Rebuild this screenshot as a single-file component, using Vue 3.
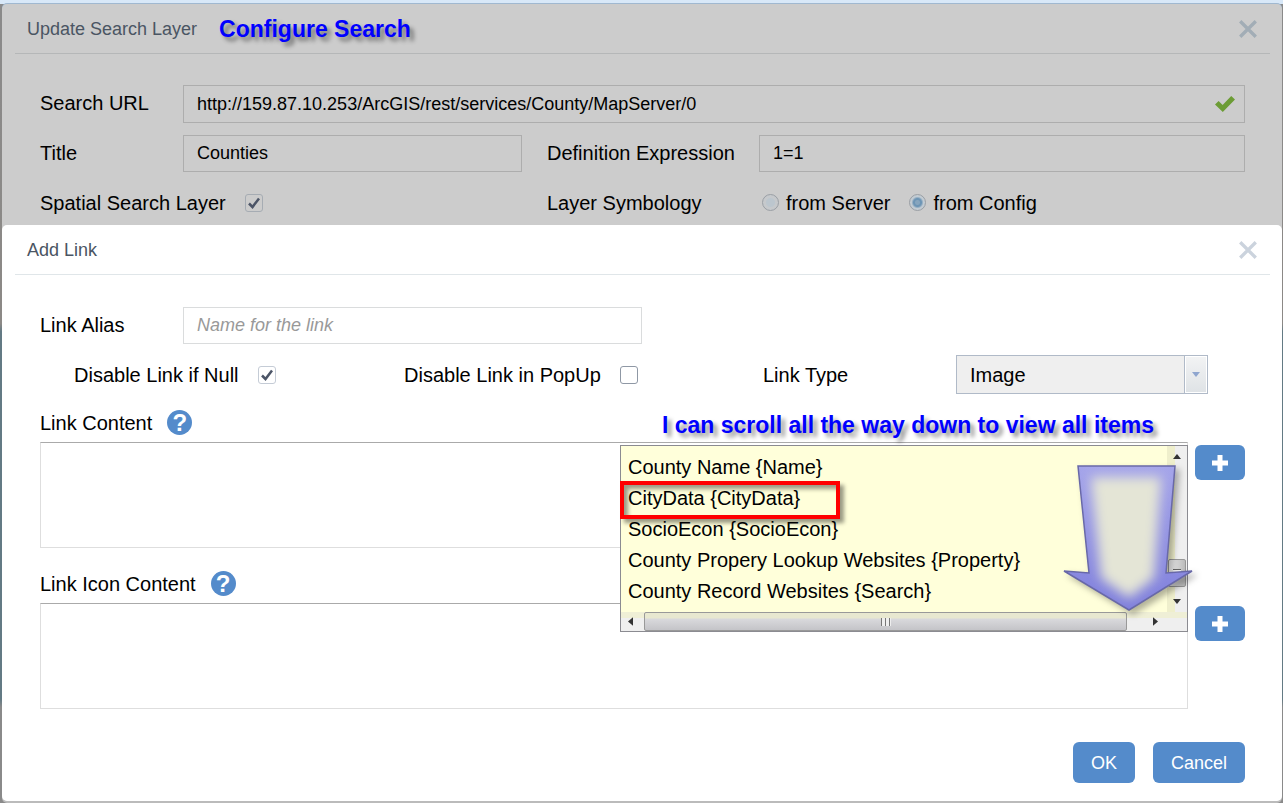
<script setup>
import { ref } from 'vue'

const searchUrl = ref('http://159.87.10.253/ArcGIS/rest/services/County/MapServer/0')
const title = ref('Counties')
const definition = ref('1=1')
const spatial = ref(true)
const symbology = ref('config')
const alias = ref('')
const disableNull = ref(true)
const disablePopup = ref(false)
const linkType = ref('Image')
const content = ref('')
const iconContent = ref('')
const fields = [
  'County Name {Name}',
  'CityData {CityData}',
  'SocioEcon {SocioEcon}',
  'County Propery Lookup Websites {Property}',
  'County Record Websites {Search}'
]
</script>

<template>
  <div class="page">
    <div class="dialog outer">
      <header class="head">
        <h1>Update Search Layer</h1>
        <strong class="note">Configure Search</strong>
        <button class="close" aria-label="Close search layer">
          <svg viewBox="0 0 18 18"><path d="M2 2L16 16M16 2L2 16" /></svg>
        </button>
      </header>
      <div class="search-form">
        <label for="url">Search URL</label>
        <div class="url-box">
          <input id="url" v-model="searchUrl" class="field" type="text" />
          <svg class="valid" viewBox="0 0 20 16"><path d="M0 8.5L3.6 5L7.6 9L16.2 0L20 3.4L7.8 16Z" /></svg>
        </div>
        <label for="title">Title</label>
        <input id="title" v-model="title" class="field" type="text" />
        <label for="definition" class="second">Definition Expression</label>
        <input id="definition" v-model="definition" class="field" type="text" />
        <div class="left-pair check-line">
          <label for="spatial">Spatial Search Layer</label>
          <span class="tick">
            <input id="spatial" v-model="spatial" type="checkbox" />
            <svg v-if="spatial" viewBox="0 0 18 18"><path d="M4 9.5L7.5 13L14 4.5" /></svg>
          </span>
        </div>
        <span id="symbology" class="second">Layer Symbology</span>
        <div class="radios" role="radiogroup" aria-labelledby="symbology">
          <label><input v-model="symbology" type="radio" name="symbology" value="server" />from Server</label>
          <label><input v-model="symbology" type="radio" name="symbology" value="config" />from Config</label>
        </div>
      </div>

      <section class="dialog inner">
        <header class="head">
          <h2>Add Link</h2>
          <button class="close" aria-label="Close add link">
            <svg viewBox="0 0 18 18"><path d="M2 2L16 16M16 2L2 16" /></svg>
          </button>
        </header>
        <div class="link-form">
          <div class="alias-row">
            <label for="alias">Link Alias</label>
            <input id="alias" v-model="alias" class="field" type="text" placeholder="Name for the link" />
          </div>
          <div class="options">
            <div class="check-line">
              <label for="null">Disable Link if Null</label>
              <span class="tick">
                <input id="null" v-model="disableNull" type="checkbox" />
                <svg v-if="disableNull" viewBox="0 0 18 18"><path d="M4 9.5L7.5 13L14 4.5" /></svg>
              </span>
            </div>
            <div class="check-line">
              <label for="popup">Disable Link in PopUp</label>
              <span class="tick">
                <input id="popup" v-model="disablePopup" type="checkbox" />
                <svg v-if="disablePopup" viewBox="0 0 18 18"><path d="M4 9.5L7.5 13L14 4.5" /></svg>
              </span>
            </div>
            <label for="type">Link Type</label>
            <div class="select-box">
              <select id="type" v-model="linkType"><option>Image</option></select>
              <span class="drop"><svg viewBox="0 0 8 5"><path d="M0 0H8L4 5Z" /></svg></span>
            </div>
          </div>

          <div class="caption">
            <label for="content">Link Content</label>
            <button class="help" aria-label="Help on link content">?</button>
          </div>
          <div class="editor">
            <textarea id="content" v-model="content"></textarea>
            <button class="add" aria-label="Add field to content">
              <svg viewBox="0 0 16 16"><path d="M5.5 0H10.5V5.5H16V10.5H10.5V16H5.5V10.5H0V5.5H5.5Z" /></svg>
            </button>
            <strong class="note scroll-note">I can scroll all the way down to view all items</strong>
            <div class="menu">
              <ul role="listbox" aria-label="Fields">
                <li v-for="f in fields" :key="f" role="option">{{ f }}</li>
              </ul>
              <div class="vbar">
                <svg class="end" viewBox="0 0 10 6"><path d="M5 0L10 6H0Z" /></svg>
                <span class="vthumb"><i></i></span>
                <svg class="end" viewBox="0 0 10 6"><path d="M0 0H10L5 6Z" /></svg>
              </div>
              <div class="hbar">
                <svg class="side" viewBox="0 0 6 10"><path d="M6 0V10L0 5Z" /></svg>
                <span class="hthumb"><i></i></span>
                <svg class="side" viewBox="0 0 6 10"><path d="M0 0V10L6 5Z" /></svg>
              </div>
              <span class="frame"></span>
              <svg class="arrow" viewBox="0 0 136 156">
                <defs>
                  <clipPath id="arrow-clip"><path d="M18 4H115L106 111L132 109L69 148L4 109L29 111Z" /></clipPath>
                  <filter id="soft" x="-30%" y="-30%" width="160%" height="160%"><feGaussianBlur stdDeviation="6" /></filter>
                  <linearGradient id="edge" x1="0" y1="0" x2="0" y2="1">
                    <stop offset="0" stop-color="#a5a5ea" />
                    <stop offset="1" stop-color="#8080dc" />
                  </linearGradient>
                </defs>
                <path class="arrow-shape" d="M18 4H115L106 111L132 109L69 148L4 109L29 111Z" />
                <g clip-path="url(#arrow-clip)">
                  <path d="M31 15H101L94 116L69 136L41 116Z" fill="#e4e5d6" filter="url(#soft)" />
                </g>
              </svg>
            </div>
          </div>

          <div class="caption">
            <label for="icon-content">Link Icon Content</label>
            <button class="help" aria-label="Help on link icon content">?</button>
          </div>
          <div class="editor">
            <textarea id="icon-content" v-model="iconContent"></textarea>
            <button class="add" aria-label="Add field to icon content">
              <svg viewBox="0 0 16 16"><path d="M5.5 0H10.5V5.5H16V10.5H10.5V16H5.5V10.5H0V5.5H5.5Z" /></svg>
            </button>
          </div>
          <footer class="actions">
            <button>OK</button>
            <button>Cancel</button>
          </footer>
        </div>
      </section>
    </div>
  </div>
</template>

<style>
body {
  background: #b4b4b4;
}
</style>

<style scoped>
.page {
  box-sizing: border-box;
  min-height: 100vh;
  padding: 0 1px 2px 2px;
  border-top: 4px solid #d8e8f8;
  background: linear-gradient(#8a8a8a, #8c8986 40%, #637a84 41%, #637a84 87%, #8a8a8a 88%);
  font: 20px/24px "Liberation Sans", Arial, sans-serif;
  color: #000;
}
.page * {
  box-sizing: border-box;
}
input,
select,
textarea,
button {
  margin: 0;
  font: inherit;
  color: inherit;
}
.dialog {
  border-radius: 5px;
}
.outer {
  background: #ccc;
  box-shadow: 0 -1px 0 #a0b8d0, 0 2px 0 #bbb;
}
.inner {
  background: #fff;
}
.head {
  display: flex;
  align-items: center;
  height: 50px;
  margin: 0 12px 0 13px;
  padding: 0 12px;
  border-bottom: 1px solid #b5b7b8;
}
.inner .head {
  border-color: #e0e6e9;
}
h1,
h2 {
  margin: 0;
  font-size: 18px;
  font-weight: 400;
  color: #4a5563;
}
.note {
  font-size: 23px;
  color: #00f;
  text-shadow: 4px 4px 4px rgba(0, 0, 0, 0.45);
  white-space: nowrap;
}
.head .note {
  margin-left: 22px;
}
.close {
  display: flex;
  margin-left: auto;
  padding: 0;
  border: 0;
  background: none;
}
.close svg {
  width: 20px;
  height: 20px;
  fill: none;
  stroke: #a2adb6;
  stroke-width: 3;
}
.inner .close svg {
  stroke: #cbd3dd;
}
.search-form {
  display: grid;
  grid-template-columns: 143px minmax(0, 339fr) 237px minmax(0, 486fr);
  grid-template-rows: 38px 37px 37px;
  row-gap: 12px;
  align-items: center;
  padding: 31px 37px 4px 38px;
}
.search-form > label,
.alias-row > label {
  padding-bottom: 2px;
}
.field {
  width: 100%;
  height: 37px;
  padding: 0 13px;
  border: 1px solid #dadcdd;
  background: #fff;
  font-size: 18px;
}
.outer .search-form .field {
  border-color: #adadad;
  background: transparent;
}
.outer .url-box .field {
  height: 38px;
}
.field::placeholder {
  color: #999;
  font-style: italic;
  opacity: 1;
}
.url-box {
  grid-column: 2 / 5;
  display: grid;
  align-items: center;
}
.url-box > * {
  grid-area: 1 / 1;
}
.valid {
  justify-self: end;
  width: 20px;
  height: 16px;
  margin-right: 10px;
  fill: #6c9c35;
}
.second {
  padding-left: 25px;
}
.left-pair {
  grid-column: 1 / 3;
}
.check-line {
  display: flex;
  align-items: center;
  gap: 19px;
}
.tick {
  display: grid;
  width: 18px;
  height: 18px;
}
.tick > * {
  grid-area: 1 / 1;
  width: 18px;
  height: 18px;
}
.tick input {
  appearance: none;
  border: 1px solid #8f98a5;
  border-radius: 3px;
}
.tick input:checked {
  border-color: #c5ccd6;
}
.outer .search-form .tick input {
  border-color: #a6acb3;
}
.tick svg {
  fill: none;
  stroke: #4c5567;
  stroke-width: 2.5;
  pointer-events: none;
}
.radios,
.radios label {
  display: flex;
  align-items: center;
}
.radios {
  gap: 19px;
  padding-left: 3px;
}
.radios label {
  gap: 7px;
}
.radios input {
  appearance: none;
  width: 17px;
  height: 17px;
  border: 1px solid #9a9fa5;
  border-radius: 50%;
  background: radial-gradient(#bcc6ce 0 4px, #c6c9cc 5px);
}
.radios input:checked {
  background: radial-gradient(#86a5be 0 2px, #6d95b5 3px 4px, #c3ccd3 6px);
}
.link-form {
  padding: 32px 37px 18px 38px;
}
.alias-row {
  display: grid;
  grid-template-columns: 143px minmax(0, 459fr) 603fr;
  align-items: center;
}
.options {
  display: grid;
  grid-template-columns: 330fr 359fr 193fr 252fr;
  align-items: center;
  margin: 11px 37px 0 34px;
}
.select-box {
  display: grid;
}
.select-box > * {
  grid-area: 1 / 1;
}
.select-box select {
  appearance: none;
  width: 100%;
  height: 39px;
  padding: 0 13px;
  border: 1px solid #b0bac8;
  border-radius: 0;
  background: #efefef;
}
.drop {
  display: flex;
  align-items: center;
  justify-content: center;
  justify-self: end;
  width: 22px;
  margin: 1px;
  border: 1px solid #fff;
  background: linear-gradient(#f2f3f4, #dfe3e6);
  outline: 1px solid #b0bac8;
  pointer-events: none;
}
.drop svg {
  width: 8px;
  height: 5px;
  fill: #8fa6cf;
}
.caption {
  display: flex;
  align-items: center;
  gap: 15px;
  height: 25px;
  margin: 16px 0 7px;
}
.help {
  width: 25px;
  height: 25px;
  padding: 0;
  border: 0;
  border-radius: 50%;
  background: #548bcb;
  color: #fff;
  font-size: 24px;
  font-weight: 700;
  line-height: 25px;
}
.editor {
  position: relative;
  display: flex;
  align-items: flex-start;
  gap: 7px;
}
.editor + .caption {
  margin-top: 23px;
}
textarea {
  display: block;
  flex: 1;
  height: 106px;
  border: 1px solid #dedede;
  border-top-color: #aaa;
  resize: none;
  background: transparent;
}
.add {
  display: flex;
  align-items: center;
  justify-content: center;
  width: 50px;
  height: 35px;
  margin-top: 3px;
  border: 0;
  border-radius: 6px;
  background: #548bcb;
}
.add svg {
  width: 16px;
  height: 16px;
  fill: #fff;
}
.scroll-note {
  position: absolute;
  right: 91px;
  top: -29px;
}
.menu {
  position: absolute;
  z-index: 1;
  right: 57px;
  top: 3px;
  display: grid;
  grid-template: 166px 19px / 1fr 20px;
  width: 568px;
  border: 1px solid #8b8b91;
  background: #efefef;
}
.menu ul {
  margin: 0;
  padding: 6px 0 0 7px;
  overflow: hidden;
  list-style: none;
  background: #ffffda;
}
.menu li {
  height: 31px;
  line-height: 31px;
  white-space: nowrap;
}
.vbar {
  display: flex;
  flex-direction: column;
  align-items: center;
  padding: 8px 0;
  background: linear-gradient(90deg, #efefcc 8px, #efefef 8px);
}
.end {
  width: 8px;
  height: 5px;
  fill: #333;
}
.vthumb {
  display: flex;
  align-items: center;
  justify-content: center;
  width: 18px;
  height: 28px;
  margin: auto 0 12px;
  border: 1px solid #989898;
  border-radius: 2px;
  background: linear-gradient(90deg, #eee, #bbb);
}
.vthumb i {
  width: 8px;
  height: 9px;
  background: repeating-linear-gradient(#666 0 1px, #eee 1px 4px);
}
.hbar {
  grid-column: 1 / 3;
  display: flex;
  align-items: center;
  padding: 0 29px 0 7px;
  background: linear-gradient(#efefd6 6px, #efefef 6px);
}
.side {
  width: 5px;
  height: 9px;
  fill: #333;
}
.hthumb {
  display: flex;
  align-items: center;
  justify-content: center;
  flex: 1;
  height: 19px;
  margin: 0 26px 0 11px;
  border: 1px solid #999;
  border-radius: 2px;
  background: linear-gradient(#e8e8d0 0 5px, #d9d9dc 6px, #c4c4c8);
}
.hthumb i {
  width: 10px;
  height: 8px;
  background: repeating-linear-gradient(90deg, #777 0 1px, #eee 1px 4px);
}
.frame {
  position: absolute;
  left: -1px;
  top: 35px;
  width: 220px;
  height: 38px;
  border: 4px solid #f00;
  box-shadow: 4px 4px 4px rgba(0, 0, 0, 0.4), inset 4px 4px 4px rgba(0, 0, 0, 0.4);
}
.arrow {
  position: absolute;
  right: -9px;
  top: 16px;
  width: 136px;
  height: 156px;
  filter: drop-shadow(4px 4px 3px rgba(0, 0, 0, 0.3));
}
.arrow-shape {
  fill: url(#edge);
  stroke: #6868a8;
  stroke-width: 1.5;
}
.actions {
  display: flex;
  justify-content: flex-end;
  gap: 18px;
  margin-top: 33px;
}
.actions button {
  height: 41px;
  padding: 0 18px;
  border: 0;
  border-radius: 6px;
  background: #548bcb;
  color: #fff;
  font-size: 18px;
}
</style>
